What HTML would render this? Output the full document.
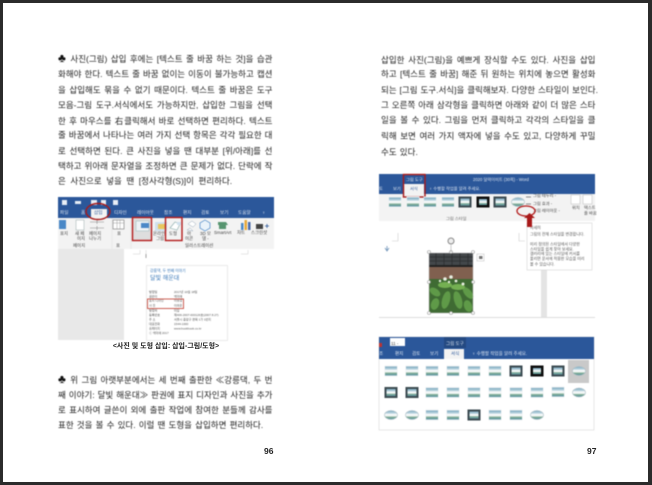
<!DOCTYPE html>
<html lang="ko">
<head>
<meta charset="utf-8">
<style>
html,body{margin:0;padding:0;background:#fff}
body{position:relative;width:652px;height:485px;overflow:hidden;font-family:"Liberation Sans","Noto Sans CJK KR",sans-serif;color:#222}
.f{position:absolute;background:#2b2b2b}
.l{position:absolute;font-size:8.5px;line-height:14px;height:14px;white-space:nowrap;text-align:justify;text-align-last:justify;filter:blur(.4px)}
.l i{font-style:normal;font-size:12px;line-height:10px;color:#111}
.a{left:58px;width:214.5px}
.b{left:381px;width:214.5px}
.n{text-align-last:left}
.c{position:absolute;font-size:7px;font-weight:bold;left:58px;width:216px;top:342px;text-align:center;line-height:10px;filter:blur(.35px)}
.p{position:absolute;font-size:8.5px;font-weight:bold;line-height:10px;filter:blur(.3px)}
svg{position:absolute;left:0;top:0;filter:blur(.55px)}
svg text{font-family:"Liberation Sans","Noto Sans CJK KR",sans-serif}
</style>
</head>
<body>
<svg width="652" height="485" viewBox="0 0 652 485">
<defs>
<linearGradient id="sky" x1="0" y1="0" x2="0" y2="1"><stop offset="0" stop-color="#7fabc0"/><stop offset=".28" stop-color="#b4d0dc"/><stop offset=".42" stop-color="#f8fafb"/><stop offset=".62" stop-color="#f0f5f4"/><stop offset=".72" stop-color="#7fab92"/><stop offset="1" stop-color="#5f98a8"/></linearGradient>
<g id="t"><rect x="-6.500" y="-5.500" width="13" height="11" fill="#eef1f3"/><rect x="-6" y="-4.500" width="12" height="9" fill="url(#sky)"/></g>
<g id="td"><rect x="-6.500" y="-5.500" width="13" height="11" fill="#3b4a50"/><rect x="-4.500" y="-3.500" width="9" height="7" fill="url(#sky)"/></g>
<g id="tk"><rect x="-6.500" y="-5.500" width="13" height="11" fill="#0c0c0c"/><rect x="-4" y="-3" width="8" height="6" fill="url(#sky)"/></g>
<g id="to"><ellipse rx="6.500" ry="4.500" fill="url(#sky)" stroke="#a9bcc4" stroke-width=".6"/></g>
</defs>

<!-- left figure -->
<rect x="58" y="197" width="216" height="143" fill="#fff"/>
<rect x="58" y="197" width="216" height="21" fill="#2b579a"/>
<rect x="58" y="218" width="216" height="31" fill="#f3f3f3"/>
<rect x="58" y="249" width="66" height="91" fill="#e8e8e8"/>
<rect x="124" y="249" width="150" height="91" fill="#fff"/>
<g fill="#e8eef6">
<rect x="62" y="200" width="5" height="5"/><rect x="75" y="201" width="6" height="3"/><rect x="91" y="200" width="6" height="5"/><rect x="101" y="200" width="5" height="5"/><rect x="113" y="200" width="5" height="5"/>
</g>
<rect x="91" y="209" width="16" height="9" fill="#f3f3f3"/>
<g font-size="4.600" fill="#dfe7f3">
<text x="60" y="214">파일</text><text x="81" y="214">홈</text><text x="114" y="214">디자인</text><text x="137" y="214">레이아웃</text><text x="164" y="214">참조</text><text x="183" y="214">편지</text><text x="201" y="214">검토</text><text x="220" y="214">보기</text><text x="238" y="214">도움말</text><text x="262" y="214">♀</text>
</g>
<text x="94" y="214" font-size="4.600" fill="#2b579a">삽입</text>
<g font-size="4.400" fill="#444">
<text x="60" y="235">표지</text><text x="75" y="235">새 페</text><text x="77" y="240">이지</text><text x="89" y="235">페이지</text><text x="89" y="240">나누기</text>
<text x="117" y="235">표</text><text x="137" y="235">그림</text><text x="153" y="235">온라인</text><text x="156" y="240">그림</text><text x="169" y="235">도형</text>
<text x="187" y="235">아</text><text x="185" y="240">이콘</text><text x="200" y="235">3D 모</text><text x="202" y="240">델 -</text><text x="214" y="234">SmartArt</text><text x="237" y="234">차트</text><text x="251" y="234">스크린샷</text>
<text x="73" y="247">페이지</text><text x="116" y="247">표</text><text x="185" y="247">일러스트레이션</text>
</g>
<rect x="59" y="220" width="7" height="9" fill="#4a88c7"/>
<rect x="76" y="220" width="8" height="10" fill="#fff" stroke="#9aa" stroke-width=".5"/>
<path d="M90 222h14M90 228h14M97 220v4M97 226v4" stroke="#888" stroke-width=".6" fill="none"/>
<rect x="113" y="220" width="11" height="9" fill="#fff" stroke="#777" stroke-width=".6"/><path d="M113 223h11M117 220v9M120 220v9" stroke="#888" stroke-width=".4"/>
<rect x="133" y="218" width="18" height="22" fill="#dedede"/>
<rect x="136" y="221" width="13" height="10" fill="#eef2f6" stroke="#8aa" stroke-width=".4"/><rect x="141" y="223" width="8" height="5" fill="#4a88c7"/>
<rect x="155" y="222" width="12" height="9" fill="#cfe0ee"/><rect x="158" y="224" width="8" height="5" fill="#e8c860"/>
<path d="M170 228l5-6 5 2-3 6z" fill="#fff" stroke="#8aa" stroke-width=".6"/><rect x="177" y="222" width="4" height="3" fill="#cfe0ee"/>
<path d="M188 224l4-3 4 3-3 3zM187 230l3-2 3 3z" fill="#fff" stroke="#9ab" stroke-width=".5"/>
<path d="M205 220l5 3v5l-5 3-5-3v-5z" fill="#eaf3fa" stroke="#4a88c7" stroke-width=".7"/>
<path d="M218 222h8l2 3h-10zM219 225h7v4h-7z" fill="#2f7d4f" opacity=".8"/>
<rect x="241" y="223" width="2.500" height="7" fill="#4a88c7"/><rect x="244.500" y="220" width="2.500" height="10" fill="#e8a93a"/><rect x="248" y="222" width="2.500" height="8" fill="#4a6aa8"/>
<rect x="256" y="224" width="7" height="5" fill="#444"/><path d="M265 226h4M267 224v4" stroke="#2b579a" stroke-width=".8"/>
<path d="M131 218v31M112 218v31" stroke="#ddd" stroke-width=".5"/>
<rect x="132.500" y="217.500" width="19" height="23" fill="none" stroke="#b31b1b" stroke-width="1.400"/>
<rect x="165.500" y="217.500" width="16.500" height="23" fill="none" stroke="#b31b1b" stroke-width="1.400"/>
<ellipse cx="98" cy="211.500" rx="12" ry="8" fill="none" stroke="#a81a1a" stroke-width="1.400"/>
<path d="M140 250v4h-7M146 250v4M248 250v4h-7" stroke="#ccc" stroke-width=".5" fill="none"/>
<path d="M146 254v4" stroke="#666" stroke-width=".6"/>
<!-- doc page -->
<rect x="146.500" y="265.500" width="81" height="75" fill="#fff" stroke="#ddd" stroke-width=".6"/>
<text x="150" y="272" font-size="3.800" fill="#3a78b8">강릉댁, 두 번째 이야기</text>
<text x="150" y="280" font-size="6" fill="#3a78b8">달빛 해운대</text>
<g font-size="3" fill="#555">
<text x="149" y="293">발행일</text><text x="174" y="293">2017년 10월 18일</text>
<text x="149" y="297.500">글쓴이</text><text x="174" y="297.500">백미애</text>
<text x="149" y="301.500">표지 디자인</text><text x="174" y="301.500">이유정</text>
<text x="149" y="306.500">사 진</text><text x="174" y="306.500">이하은</text>
<text x="149" y="311.500">발행처</text><text x="174" y="311.500">미담</text>
<text x="149" y="316">등록번호</text><text x="174" y="316">제406-2007-000126호(2007.8.27)</text>
<text x="149" y="320.500">주 소</text><text x="174" y="320.500">서울시 중랑구 면목 1가 1번지</text>
<text x="149" y="325">대표전화</text><text x="174" y="325">1544-1000</text>
<text x="149" y="329.500">홈페이지</text><text x="174" y="329.500">www.bookbook.co.kr</text>
<text x="149" y="334">ⓒ 백미애 2017</text>
</g>
<rect x="147.500" y="299" width="36" height="9.500" fill="none" stroke="#c0392b" stroke-width=".8"/>

<!-- right figure 1 -->
<rect x="379" y="174" width="216" height="144" fill="#fff"/>
<rect x="379" y="174" width="216" height="20" fill="#2b579a"/>
<rect x="379" y="194" width="216" height="27" fill="#f3f3f3"/>
<rect x="541" y="270" width="6" height="48" fill="#e4e4e4"/>
<rect x="379" y="317" width="216" height="1" fill="#ddd"/>
<rect x="404" y="184" width="20" height="10" fill="#f3f3f3"/>
<rect x="403.500" y="174.500" width="21.500" height="22.500" fill="none" stroke="#a81a1a" stroke-width="1.400"/>
<text x="406" y="181" font-size="4.200" fill="#e8eef6">그림 도구</text>
<text x="410" y="190" font-size="4.200" fill="#2b579a">서식</text>
<g font-size="4.200" fill="#dfe7f3"><text x="379" y="190">토</text><text x="393" y="190">보기</text><text x="429" y="190">♀ 수행할 작업을 알려 주세요.</text><text x="473" y="181">2020 달력이미트 (30쪽) - Word</text></g>
<use href="#t" x="395" y="202"/>
<use href="#t" x="413" y="202"/><use href="#t" x="430" y="202"/><use href="#t" x="448" y="202"/>
<use href="#td" x="465" y="202"/><use href="#tk" x="483" y="202"/><use href="#td" x="500" y="202"/><use href="#to" x="518" y="202"/>
<text x="446" y="220" font-size="4.200" fill="#666">그림 스타일</text>
<g font-size="4.200" fill="#444"><text x="533" y="197">그림 테두리 -</text><text x="533" y="205">그림 효과 -</text><text x="533" y="212">그림 레이아웃 -</text><text x="572" y="209">위치</text><text x="584" y="209">텍스트</text><text x="584" y="214.500">줄 바꿈</text></g>
<rect x="571" y="195" width="9" height="9" fill="#fff" stroke="#aaa" stroke-width=".4"/><rect x="583" y="195" width="9" height="9" fill="#fff" stroke="#aaa" stroke-width=".4"/>
<path d="M526 197h5M526 204h5" stroke="#666" stroke-width=".8"/>
<path d="M392 241h6v-8M519 233v8h6" stroke="#ccc" stroke-width=".6" fill="none"/>
<path d="M387 250v-4m-2 2l2 3 2-3" stroke="#6f93b8" stroke-width=".8" fill="none"/>
<!-- photo -->
<rect x="429" y="253" width="44" height="60" fill="#3f6b33"/>
<rect x="429" y="253" width="44" height="14" fill="#43474a"/>
<path d="M429 257h44M429 261h44M436 253v12M444 253v12M452 253v12M460 253v12M468 253v12" stroke="#2c2e30" stroke-width=".8"/>
<rect x="429" y="265" width="44" height="2" fill="#222"/>
<rect x="429" y="267" width="44" height="12" fill="#80604f"/>
<g fill="#5f9a48"><ellipse cx="435" cy="292" rx="6" ry="3.500" transform="rotate(35 435 292)"/><ellipse cx="446" cy="300" rx="4" ry="9" transform="rotate(15 446 300)"/><ellipse cx="458" cy="300" rx="4" ry="9" transform="rotate(-15 458 300)"/><ellipse cx="468" cy="293" rx="3.500" ry="7" transform="rotate(-40 468 293)"/><ellipse cx="445" cy="285" rx="7" ry="3" fill="#74b052"/><ellipse cx="458" cy="287" rx="7" ry="3" fill="#74b052"/><ellipse cx="435" cy="304" rx="4" ry="6" transform="rotate(20 435 304)"/><ellipse cx="468" cy="306" rx="4" ry="6" transform="rotate(-20 468 306)"/></g>
<g fill="#e9efe2"><circle cx="445" cy="279" r="1.800"/><circle cx="451" cy="277" r="1.800"/><circle cx="456" cy="281" r="1.400"/><circle cx="440" cy="281" r="1.200"/><circle cx="463" cy="284" r="1.500"/><circle cx="449" cy="282" r="1.200"/></g>
<path d="M429 253h44v60h-44z" fill="none" stroke="#bbb" stroke-width=".5"/>
<g fill="#fff" stroke="#999" stroke-width=".6"><circle cx="429" cy="252" r="1.500"/><circle cx="451" cy="252" r="1.500"/><circle cx="473" cy="252" r="1.500"/><circle cx="429" cy="282" r="1.500"/><circle cx="473" cy="282" r="1.500"/><circle cx="429" cy="313" r="1.500"/><circle cx="451" cy="313" r="1.500"/><circle cx="473" cy="313" r="1.500"/></g>
<path d="M451 252v-7" stroke="#999" stroke-width=".5"/><circle cx="451" cy="241" r="3" fill="#eee" stroke="#888" stroke-width="1"/>
<rect x="477" y="254" width="7" height="7" fill="#fff" stroke="#bbb" stroke-width=".5"/><rect x="479" y="256" width="3.500" height="3" fill="#777"/>
<!-- tooltip -->
<rect x="527" y="223" width="65" height="47" fill="#fff" stroke="#d4d4d4" stroke-width=".6"/>
<g font-size="3.900" fill="#555"><text x="530" y="229">자세히</text><text x="530" y="235.500">그림의 전체 스타일을 변경합니다.</text><text x="530" y="245.500">미리 정의된 스타일에서 다양한</text><text x="530" y="250.500">스타일을 쉽게 찾아 보세요.</text><text x="530" y="255">갤러리에 있는 스타일에 커서를</text><text x="530" y="260">올리면 문서에 적용한 모습을 미리</text><text x="530" y="265.500">볼 수 있습니다.</text></g>
<ellipse cx="526" cy="211" rx="9" ry="5" fill="none" stroke="#b31b1b" stroke-width="1.300"/>
<path d="M529.500 213l5.500 5h-3v9h-5v-9h-3z" fill="#a81a1a"/>

<!-- right figure 2 -->
<rect x="379" y="337" width="215" height="93" fill="#fff" stroke="#d8d8d8" stroke-width=".6"/>
<rect x="379" y="337" width="215" height="22" fill="#2b579a"/>
<rect x="444" y="337" width="22" height="11" fill="#244a82"/>
<rect x="390" y="338" width="15" height="8" fill="#fff"/>
<rect x="379" y="343" width="3" height="4" fill="#b33"/>
<rect x="444" y="349" width="20" height="10" fill="#f3f3f3"/>
<text x="391" y="345" font-size="4.500" fill="#444">11 -</text>
<text x="446" y="345" font-size="4.500" fill="#dfe7f3">그림 도구</text>
<text x="451" y="355" font-size="4.500" fill="#2b579a">서식</text>
<g font-size="4.500" fill="#dfe7f3"><text x="379" y="355">조</text><text x="395" y="355">편지</text><text x="412" y="355">검토</text><text x="430" y="355">보기</text><text x="472" y="355">♀ 수행할 작업을 알려 주세요.</text></g>
<rect x="568" y="360" width="21" height="23" fill="#c9c9c9"/>
<use href="#t" x="391" y="371"/><use href="#t" x="412" y="371"/><use href="#t" x="432" y="371"/><use href="#t" x="453" y="371"/><use href="#t" x="474" y="371"/><use href="#t" x="495" y="371"/><use href="#td" x="516" y="371"/><use href="#tk" x="537" y="371"/><use href="#td" x="558" y="371"/><use href="#to" x="579" y="371"/>
<use href="#td" x="391" y="392.500"/><use href="#td" x="412" y="392.500"/><use href="#t" x="432" y="392.500"/><use href="#t" x="453" y="392.500"/><use href="#t" x="474" y="392.500"/><use href="#t" x="495" y="392.500"/><use href="#t" x="516" y="392.500"/><use href="#t" x="537" y="392.500"/><use href="#t" x="558" y="392"/><use href="#to" x="579" y="392.500"/>
<use href="#to" x="391" y="415"/><use href="#to" x="412" y="415"/><use href="#t" x="432" y="415"/><use href="#t" x="453" y="415"/><use href="#td" x="474" y="415"/><use href="#t" x="495" y="415"/><use href="#t" x="516" y="415"/><use href="#to" x="537" y="415"/>
</svg>

<div class="l a" style="top:52px"><i>♣</i> 사진(그림) 삽입 후에는 [텍스트 줄 바꿈 하는 것]을 습관</div>
<div class="l a" style="top:67px">화해야 한다. 텍스트 줄 바꿈 없이는 이동이 불가능하고 캡션</div>
<div class="l a" style="top:83px">을 삽입해도 묶을 수 없기 때문이다. 텍스트 줄 바꿈은 도구</div>
<div class="l a" style="top:98px">모음-그림 도구.서식에서도 가능하지만, 삽입한 그림을 선택</div>
<div class="l a" style="top:114px">한 후 마우스를 右클릭해서 바로 선택하면 편리하다. 텍스트</div>
<div class="l a" style="top:128px">줄 바꿈에서 나타나는 여러 가지 선택 항목은 각각 필요한 대</div>
<div class="l a" style="top:144px">로 선택하면 된다. 큰 사진을 넣을 땐 대부분 [위/아래]를 선</div>
<div class="l a" style="top:159px">택하고 위아래 문자열을 조정하면 큰 문제가 없다. 단락에 작</div>
<div class="l a n" style="top:174px;word-spacing:2.2px">은 사진으로 넣을 땐 [정사각형(S)]이 편리하다.</div>
<div class="c">&lt;사진 및 도형 삽입: 삽입-그림/도형&gt;</div>
<div class="l a" style="top:373px"><i>♣</i> 위 그림 아랫부분에서는 세 번째 출판한 ≪강릉댁, 두 번</div>
<div class="l a" style="top:388px">째 이야기: 달빛 해운대≫ 판권에 표지 디자인과 사진을 추가</div>
<div class="l a" style="top:403px">로 표시하여 글쓴이 외에 출판 작업에 참여한 분들께 감사를</div>
<div class="l a n" style="top:418px;word-spacing:.8px">표한 것을 볼 수 있다. 이럴 땐 도형을 삽입하면 편리하다.</div>
<div class="p" style="left:264px;top:446px">96</div>

<div class="l b" style="top:53px">삽입한 사진(그림)을 예쁘게 장식할 수도 있다. 사진을 삽입</div>
<div class="l b" style="top:67px">하고 [텍스트 줄 바꿈] 해준 뒤 원하는 위치에 놓으면 활성화</div>
<div class="l b" style="top:83px;width:217px">되는 [그림 도구.서식]을 클릭해보자. 다양한 스타일이 보인다.</div>
<div class="l b" style="top:98px">그 오른쪽 아래 삼각형을 클릭하면 아래와 같이 더 많은 스타</div>
<div class="l b" style="top:113px">일을 볼 수 있다. 그림을 먼저 클릭하고 각각의 스타일을 클</div>
<div class="l b" style="top:129px">릭해 보면 여러 가지 액자에 넣을 수도 있고, 다양하게 꾸밀</div>
<div class="l b n" style="top:145px;word-spacing:.8px">수도 있다.</div>
<div class="p" style="left:587px;top:446px">97</div>

<div class="f" style="left:0;top:0;width:652px;height:3px"></div>
<div class="f" style="left:0;top:0;width:3px;height:485px"></div>
<div class="f" style="left:648px;top:0;width:4px;height:485px"></div>
<div class="f" style="left:0;top:482px;width:652px;height:3px"></div>
</body>
</html>
